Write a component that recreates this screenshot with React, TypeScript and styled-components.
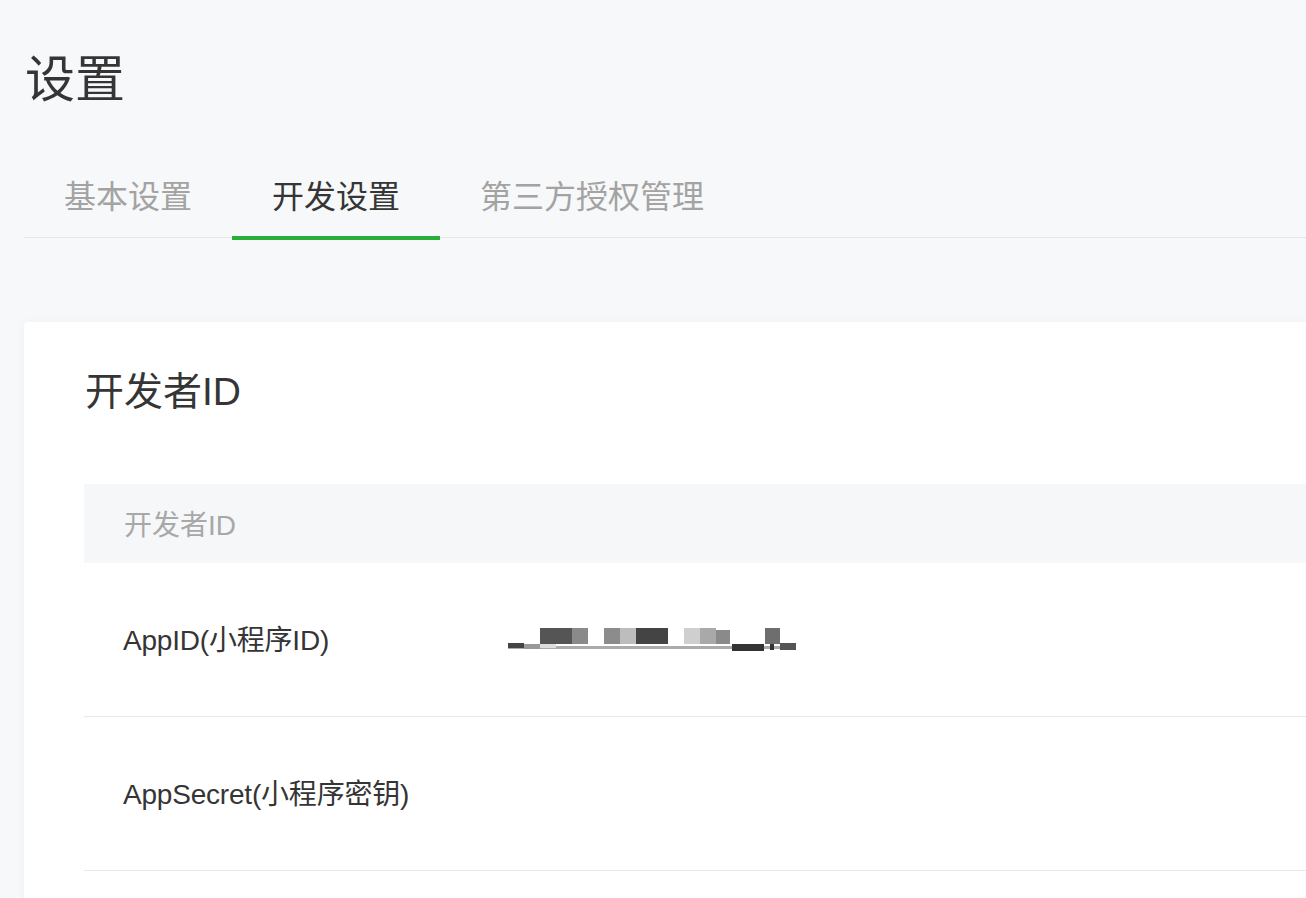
import styled, { createGlobalStyle } from "styled-components";

const GlobalStyle = createGlobalStyle`
  html, body {
    margin: 0;
    padding: 0;
    background: #f7f8fa;
  }
  body {
    font-family: "Liberation Sans", "Noto Sans CJK SC", sans-serif;
    color: #353535;
  }
`;

const tabs = ["基本设置", "开发设置", "第三方授权管理"];
const activeTab = 1;

const rows = [
  { label: "AppID(小程序ID)", masked: true },
  { label: "AppSecret(小程序密钥)", masked: false },
];

// pixelated blocks standing in for the redacted AppID
const maskBlocks = [
  { x: 32, y: 0, w: 32, h: 16, c: "#555" },
  { x: 64, y: 0, w: 16, h: 16, c: "#8a8a8a" },
  { x: 96, y: 0, w: 16, h: 16, c: "#8c8c8c" },
  { x: 112, y: 0, w: 16, h: 16, c: "#bdbdbd" },
  { x: 128, y: 0, w: 32, h: 16, c: "#444" },
  { x: 176, y: 0, w: 16, h: 16, c: "#cfcfcf" },
  { x: 192, y: 0, w: 16, h: 16, c: "#a9a9a9" },
  { x: 208, y: 2, w: 14, h: 14, c: "#8a8a8a" },
  { x: 257, y: 0, w: 15, h: 16, c: "#6e6e6e" },
  { x: 0, y: 15, w: 16, h: 5, c: "#444" },
  { x: 16, y: 16, w: 16, h: 5, c: "#999" },
  { x: 32, y: 16, w: 16, h: 4, c: "#ddd" },
  { x: 224, y: 16, w: 32, h: 7, c: "#333" },
];

const MaskedValue = () => (
  <svg width="290" height="24" viewBox="0 0 290 24" aria-hidden="true">
    <rect x="0" y="18" width="288" height="3" fill="#666" opacity="0.55" />
    {maskBlocks.map((b, i) => (
      <rect key={i} x={b.x} y={b.y} width={b.w} height={b.h} fill={b.c} />
    ))}
    <rect x="262" y="16" width="4" height="6" fill="#333" />
    <rect x="272" y="15" width="16" height="7" fill="#555" />
  </svg>
);

const App = () => {
  return (
    <>
      <GlobalStyle />
      <Page>
        <Title>设置</Title>
        <TabBar>
          {tabs.map((t, i) => (
            <Tab key={t} $active={i === activeTab}>
              {t}
            </Tab>
          ))}
        </TabBar>
        <Card>
          <CardTitle>开发者ID</CardTitle>
          <Table>
            <HeadRow>开发者ID</HeadRow>
            {rows.map((r) => (
              <Row key={r.label}>
                <Label>{r.label}</Label>
                <Value>{r.masked && <MaskedValue />}</Value>
              </Row>
            ))}
          </Table>
        </Card>
      </Page>
    </>
  );
};

const Page = styled.div`
  box-sizing: border-box;
  height: 100vh;
  overflow: hidden;
  padding: 55px 0 0 24px;
`;

const Title = styled.h1`
  margin: 0 0 51px 1px;
  font-size: 50px;
  line-height: 50px;
  font-weight: 400;
  color: #353535;
`;

const TabBar = styled.div`
  display: flex;
  border-bottom: 1px solid #e6e7e9;
`;

const Tab = styled.div<{ $active: boolean }>`
  box-sizing: border-box;
  height: 84px;
  margin-bottom: -3px;
  padding: 0 40px 4px;
  display: flex;
  align-items: center;
  font-size: 32px;
  color: ${(p) => (p.$active ? "#353535" : "#a3a3a3")};
  border-bottom: 4px solid ${(p) => (p.$active ? "#2aae3a" : "transparent")};
`;

const Card = styled.div`
  margin-top: 84px;
  background: #fff;
  border-radius: 4px 0 0 0;
  box-shadow: 0 0 8px rgba(0, 0, 0, 0.04);
  padding: 51px 0 40px 60px;
`;

const CardTitle = styled.h2`
  margin: 0 0 73px 1px;
  font-size: 39px;
  line-height: 38px;
  font-weight: 400;
  color: #353535;
`;

const Table = styled.div`
  display: flex;
  flex-direction: column;
`;

const HeadRow = styled.div`
  height: 79px;
  display: flex;
  align-items: center;
  padding-left: 40px;
  padding-bottom: 2px;
  box-sizing: border-box;
  background: #f6f7f9;
  font-size: 28px;
  color: #a8a8a8;
`;

const Row = styled.div`
  box-sizing: border-box;
  height: 154px;
  display: grid;
  grid-template-columns: 424px 1fr;
  align-items: center;
  border-bottom: 1px solid #e8e8e8;
`;

const Label = styled.div`
  padding: 0 0 4px 39px;
  font-size: 28px;
  letter-spacing: -0.2px;
  color: #353535;
`;

const Value = styled.div`
  display: flex;
  align-items: center;
`;

export default App;
